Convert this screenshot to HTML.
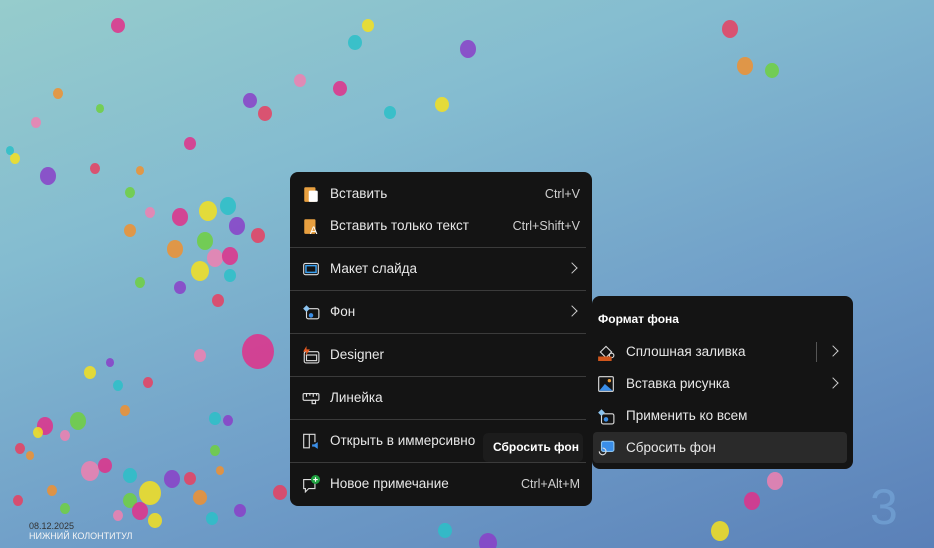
<!DOCTYPE html><html style="width:934px;height:548px;overflow:hidden;background:#5a80b8"><head><meta charset="utf-8"><style>
*{margin:0;padding:0;box-sizing:border-box}
body{width:934px;height:548px;overflow:hidden;position:relative;font-family:"Liberation Sans",sans-serif;
background:linear-gradient(160deg,#96cccc 0%,#84bcd0 30%,#6f9dc8 65%,#5a80b8 100%)}
.b{position:absolute;border-radius:50%;opacity:.85}
.m{position:absolute;background:#141414;border-radius:8px;color:#e8e8e8;font-size:13.5px}
.r{position:absolute;left:0;right:0;height:20px;line-height:20px}
.r .t{position:absolute;left:40px}
.r .k{position:absolute;right:12px;color:#cfcfcf;font-size:12.5px}
.r .ic{position:absolute;left:12px;top:1px;width:18px;height:18px}
.s{position:absolute;left:0;right:6px;height:1px;background:#3b3b3b}
.ch{position:absolute;right:16px;top:5px;width:8px;height:8px;border-right:1.5px solid #ccc;border-top:1.5px solid #ccc;transform:rotate(45deg)}
</style></head><body>
<div id="bal"></div>
<script>
var c=["#e0308a","#f5e020","#2bc0c8","#8a3fc8","#e84060","#f09030","#70d040","#f080b0"];
var p=[[118,25,7],[368,25,6],[355,42,7],[468,48,8],[730,28,8],[745,65,8],[772,70,7],[300,80,6],[340,88,7],[442,104,7],[390,112,6],[250,100,7],[265,113,7],[58,93,5],[100,108,4],[36,122,5],[190,143,6],[15,158,5],[10,150,4],[48,175,8],[95,168,5],[140,170,4],[130,192,5],[150,212,5],[180,216,8],[208,210,9],[228,205,8],[237,225,8],[258,235,7],[175,248,8],[205,240,8],[215,257,8],[230,255,8],[200,270,9],[230,275,6],[180,287,6],[218,300,6],[130,230,6],[140,282,5],[200,355,6],[258,350,16],[90,372,6],[118,385,5],[110,362,4],[148,382,5],[125,410,5],[78,420,8],[65,435,5],[45,425,8],[38,432,5],[215,418,6],[228,420,5],[20,448,5],[30,455,4],[215,450,5],[90,470,9],[105,465,7],[150,492,11],[130,475,7],[172,478,8],[190,478,6],[200,497,7],[130,500,7],[118,515,5],[140,510,8],[155,520,7],[212,518,6],[240,510,6],[280,492,7],[52,490,5],[65,508,5],[775,480,8],[752,500,8],[720,530,9],[445,530,7],[488,542,9],[18,500,5],[220,470,4]];
var h="";p.forEach(function(a,i){h+='<div class="b" style="left:'+(a[0]-a[2])+'px;top:'+(a[1]-a[2])+'px;width:'+2*a[2]+'px;height:'+(2.2*a[2])+'px;background:'+c[i%8]+'"></div>'});
document.getElementById("bal").innerHTML=h;
</script>
<div style="position:absolute;left:870px;top:478px;font-size:50px;color:rgba(120,170,220,.6);font-family:'Liberation Sans'">3</div>
<div style="position:absolute;left:29px;top:521px;font-size:9px;color:#333">08.12.2025</div>
<div style="position:absolute;left:29px;top:531px;font-size:9px;color:#f4f4f4">НИЖНИЙ КОЛОНТИТУЛ</div>

<div class="m" style="left:290px;top:172px;width:302px;height:334px">
<div class="r" style="top:12px"><svg class="ic" viewBox="0 0 16 16"><rect x="2" y="2" width="10" height="13" rx="1" fill="#e8a040"/><rect x="6" y="5" width="8" height="10" rx="1" fill="#fff"/></svg><span class="t">Вставить</span><span class="k">Ctrl+V</span></div>
<div class="r" style="top:44px"><svg class="ic" viewBox="0 0 16 16"><rect x="2" y="2" width="10" height="13" rx="1" fill="#e8a040"/><text x="7" y="15" font-size="10" fill="#fff" font-family="Liberation Sans">A</text></svg><span class="t">Вставить только текст</span><span class="k">Ctrl+Shift+V</span></div>
<div class="s" style="top:75px"></div>
<div class="r" style="top:87px"><svg class="ic" viewBox="0 0 16 16"><rect x="1.5" y="3" width="13" height="10" rx="1.5" fill="none" stroke="#ddd"/><rect x="3.5" y="5" width="9" height="6" fill="none" stroke="#3aa0f0" stroke-width="1.3"/></svg><span class="t">Макет слайда</span><i class="ch"></i></div>
<div class="s" style="top:118px"></div>
<div class="r" style="top:130px"><svg class="ic" viewBox="0 0 16 16"><rect x="4" y="5" width="11" height="9" rx="1.5" fill="none" stroke="#ddd"/><path d="M1 5l3-3 3 3-3 3z" fill="#8cc4f0"/><circle cx="8" cy="11" r="2" fill="#3a8ee8"/></svg><span class="t">Фон</span><i class="ch"></i></div>
<div class="s" style="top:161px"></div>
<div class="r" style="top:173px"><svg class="ic" viewBox="0 0 16 16"><rect x="2" y="5" width="13" height="10" rx="1.5" fill="none" stroke="#ddd"/><rect x="4" y="8" width="9" height="5" fill="none" stroke="#ddd"/><path d="M4 0L1 5h3l-1 4 4-6H4z" fill="#e85a20"/></svg><span class="t">Designer</span></div>
<div class="s" style="top:204px"></div>
<div class="r" style="top:216px"><svg class="ic" viewBox="0 0 16 16"><rect x="1" y="4" width="14" height="6" rx="1" fill="none" stroke="#ddd"/><path d="M4 4v3M7 4v2M10 4v3M13 4v2" stroke="#ddd"/><rect x="9" y="10" width="3" height="3" fill="none" stroke="#ddd"/></svg><span class="t">Линейка</span></div>
<div class="s" style="top:247px"></div>
<div class="r" style="top:259px"><svg class="ic" viewBox="0 0 16 16"><path d="M1.5 2h5v12h-5zM6.5 2h5v7" fill="none" stroke="#ddd"/><path d="M9 11h2l3-2v6l-3-2H9z" fill="#3a8ee8"/></svg><span class="t">Открыть в иммерсивно</span></div>
<div class="s" style="top:290px"></div>
<div class="r" style="top:302px"><svg class="ic" viewBox="0 0 16 16"><path d="M1.5 4h10v8H6l-3 3v-3H1.5z" fill="none" stroke="#ddd"/><circle cx="12" cy="4" r="4" fill="#20a040"/><path d="M12 2v4M10 4h4" stroke="#fff"/></svg><span class="t">Новое примечание</span><span class="k">Ctrl+Alt+M</span></div>
</div>

<div style="position:absolute;left:483px;top:433px;width:100px;height:29px;background:#1c1c1c;border-radius:5px;color:#fff;font-size:12px;font-weight:bold;line-height:29px;padding-left:10px">Сбросить фон</div>

<div class="m" style="left:592px;top:296px;width:261px;height:173px">
<div style="position:absolute;left:6px;top:16px;font-size:12px;font-weight:bold;color:#fff">Формат фона</div>
<div class="r" style="top:46px"><svg class="ic" style="left:5px" viewBox="0 0 16 16"><path d="M3 8l5-5 5 5-5 5z" fill="none" stroke="#ddd"/><circle cx="13" cy="11" r="2" fill="none" stroke="#ddd"/><rect x="1" y="12" width="12" height="4" fill="#d0561c"/></svg><span class="t" style="left:34px">Сплошная заливка</span><div style="position:absolute;right:36px;top:0;width:1px;height:20px;background:#555"></div><i class="ch"></i></div>
<div class="r" style="top:78px"><svg class="ic" style="left:5px" viewBox="0 0 16 16"><rect x="1.5" y="1.5" width="13" height="13" rx="1" fill="none" stroke="#ddd"/><path d="M2 14l5-6 7 6z" fill="#3a8ee8"/><circle cx="11" cy="5" r="1.5" fill="#e8a040"/></svg><span class="t" style="left:34px">Вставка рисунка</span><i class="ch"></i></div>
<div class="r" style="top:110px"><svg class="ic" style="left:5px" viewBox="0 0 16 16"><rect x="4" y="6" width="11" height="9" rx="1.5" fill="none" stroke="#ddd"/><path d="M1 5l3-3 3 3-3 3z" fill="#8cc4f0"/><circle cx="8" cy="11" r="2" fill="#3a8ee8"/></svg><span class="t" style="left:34px">Применить ко всем</span></div>
<div style="position:absolute;left:1px;top:136px;width:254px;height:31px;background:#2a2a2a;border-radius:4px"></div>
<div class="r" style="top:142px"><svg class="ic" style="left:5px" viewBox="0 0 16 16"><rect x="4" y="2" width="11" height="9" rx="1.5" fill="#3a8ee8" stroke="#8cc4f0"/><path d="M2 11a3 3 0 1 0 3-3" fill="none" stroke="#ddd"/></svg><span class="t" style="left:34px">Сбросить фон</span></div>
</div>
</body></html>
